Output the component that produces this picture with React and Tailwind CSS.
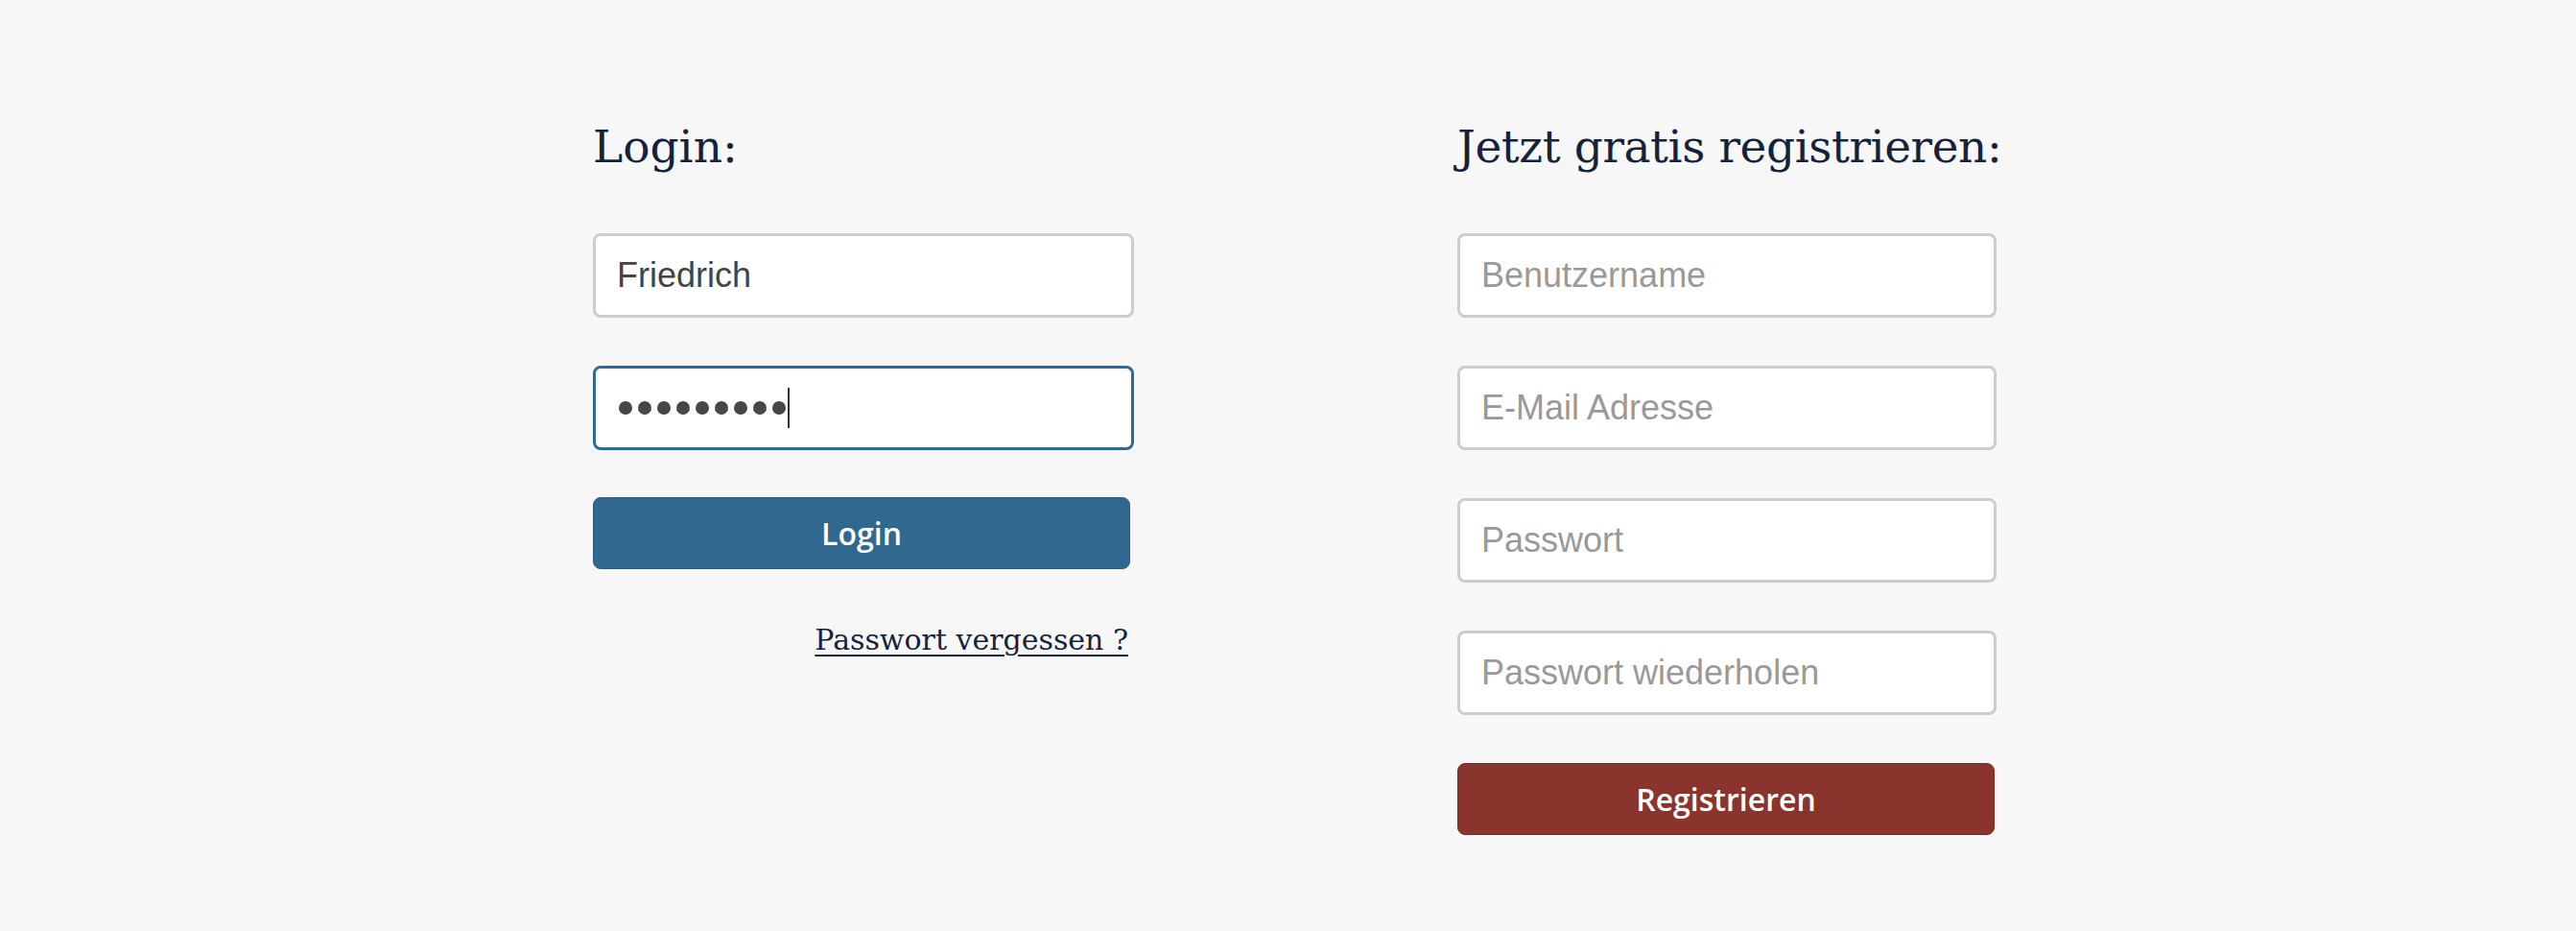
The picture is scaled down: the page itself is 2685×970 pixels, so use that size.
import { useState } from "react";

const serif = { fontFamily: '"DejaVu Serif", "Liberation Serif", serif' };

const inputClass =
  "w-full h-[88px] rounded-[8px] border-[3px] border-[#cccccc] bg-white px-[22px] text-[36px] text-[#444444] placeholder:text-[#999999] outline-none font-['Liberation_Sans',Arial,sans-serif]";

const App = () => {
  const [user, setUser] = useState("Friedrich");

  return (
    <div className="min-h-screen w-full bg-[#f7f7f7]">
      <div className="flex gap-[337px] pl-[618px] pt-[129px]">
        {/* Login column */}
        <div className="flex w-[564px] flex-col">
          <h2 className="whitespace-nowrap text-[47px] leading-none text-[#14233b]" style={serif}>
            Login:
          </h2>

          <input
            className={`${inputClass} mt-[67px]`}
            value={user}
            onChange={(e) => setUser(e.target.value)}
          />

          {/* focused password field */}
          <div className="mt-[50px] flex h-[88px] w-full items-center rounded-[8px] border-[3px] border-[#2e6a93] bg-white pl-[24px]">
            <div className="flex items-center gap-[6px]">
              {[...Array(9)].map((_, i) => (
                <span key={i} className="h-[14px] w-[14px] rounded-full bg-[#474747]" />
              ))}
            </div>
            <span className="ml-[2px] h-[42px] w-[2px] bg-[#333333]" />
          </div>

          <button className="mt-[49px] h-[75px] w-[560px] rounded-[8px] border border-[#2a5e82] bg-[#306890] text-[32px] font-semibold text-white font-['Open_Sans',sans-serif]">
            Login
          </button>

          <div className="mt-[59px] flex justify-end pr-[6px]">
            <a
              href="#"
              className="text-[30px] leading-none text-[#14233b] underline decoration-2 underline-offset-[5px]"
              style={serif}
            >
              Passwort vergessen ?
            </a>
          </div>
        </div>

        {/* Register column */}
        <div className="flex w-[562px] flex-col">
          <h2
            className="whitespace-nowrap text-[47px] leading-none tracking-[-0.4px] text-[#14233b]"
            style={serif}
          >
            Jetzt gratis registrieren:
          </h2>

          <input className={`${inputClass} mt-[67px]`} placeholder="Benutzername" />
          <input className={`${inputClass} mt-[50px]`} placeholder="E-Mail Adresse" />
          <input className={`${inputClass} mt-[50px]`} placeholder="Passwort" type="password" />
          <input className={`${inputClass} mt-[50px]`} placeholder="Passwort wiederholen" type="password" />

          <button className="mt-[50px] h-[75px] w-[560px] rounded-[8px] border border-[#7a2c27] bg-[#8a342e] text-[32px] font-semibold text-white font-['Open_Sans',sans-serif]">
            Registrieren
          </button>
        </div>
      </div>
    </div>
  );
};

export default App;
